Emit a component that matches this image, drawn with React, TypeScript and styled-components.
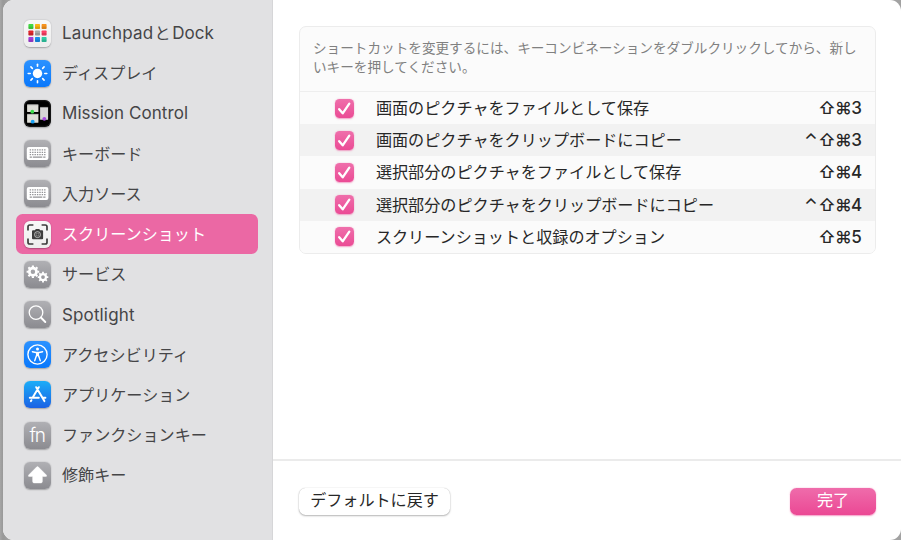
import React from 'react';
import styled, { createGlobalStyle, css } from 'styled-components';

const GlobalStyle = createGlobalStyle`
  * { box-sizing: border-box; }
  body {
    margin: 0;
    overflow: hidden;
    font-family: Inter, "Noto Sans CJK JP", sans-serif;
  }
`;

const Backdrop = styled.div`
  width: 901px;
  height: 540px;
  padding-left: 3px;
  background: linear-gradient(90deg, #a6a6a6 0, #989898 3px, #b4b4b4 20px, #a2a2a2 100%);
`;

const Sheet = styled.main`
  display: flex;
  width: 898px;
  height: 540px;
  overflow: hidden;
  border-radius: 11px;
  background: #fff;
`;

const Sidebar = styled.nav`
  width: 270px;
  flex: none;
  padding: 12.9px 14px 0 13.3px;
  background: #e1e1e3;
  border-right: 1px solid #d6d6d8;
`;

const Item = styled.div<{ $selected?: boolean }>`
  display: flex;
  align-items: center;
  gap: 10.7px;
  height: 40.23px;
  padding-left: 8px;
  border-radius: 6.5px;
  color: ${p => (p.$selected ? '#fff' : '#454547')};
  background: ${p => (p.$selected ? '#eb68a4' : 'transparent')};
`;

const ItemLabel = styled.span`
  display: flex;
  font-size: 16.1px;
  line-height: 24px;
  white-space: nowrap;
`;

const Latin = styled.span<{ $spacing?: number }>`
  font-size: 17px;
  letter-spacing: ${p => p.$spacing ?? 0}px;
`;

const Particle = styled.span`
  margin: 0 1.6px 0 1.2px;
`;

const Icon = styled.svg`
  display: block;
  width: 27px;
  height: 27px;
  flex: none;
  border-radius: 6px;
  box-shadow: 0 0.5px 1.5px rgba(0, 0, 0, 0.28);
`;

const Content = styled.section`
  display: flex;
  flex: 1;
  flex-direction: column;
`;

const Body = styled.div`
  flex: 1;
  padding: 26px 25px 0 26px;
`;

const Panel = styled.div`
  height: 228px;
  overflow: hidden;
  border: 1px solid #ececec;
  border-radius: 7px;
  background: #fbfbfb;
`;

const Hint = styled.p`
  height: 65px;
  margin: 0;
  padding: 12px 0 0 13px;
  border-bottom: 1.5px solid #eee;
  color: #808080;
  font-size: 13.61px;
  line-height: 19px;
  white-space: nowrap;
`;

const Shortcut = styled.div<{ $striped: boolean }>`
  display: flex;
  align-items: center;
  height: 32.2px;
  padding: 0 13px 0 35.4px;
  color: #272727;
  font-size: 16.13px;
  line-height: 24px;
  white-space: nowrap;
  background: ${p => (p.$striped ? '#f2f2f2' : '#fbfbfb')};
`;

const CheckBox = styled.span`
  display: flex;
  width: 19px;
  height: 19px;
  margin-right: 21.5px;
  border-radius: 4.5px;
  background: linear-gradient(#ef6fab, #eb4b95);
  box-shadow: 0 0.5px 1.5px rgba(235, 75, 149, 0.5);
`;

const Keys = styled.span`
  display: flex;
  margin-left: auto;
  font-size: 17px;
  font-weight: 500;
`;

const Key = styled.span<{ $width: number }>`
  width: ${p => p.$width}px;
  text-align: center;
`;

const Footer = styled.footer`
  display: flex;
  justify-content: space-between;
  height: 81px;
  padding: 26.5px 25px 0 26px;
  border-top: 2px solid #ebebeb;
`;

const primary = css`
  width: 86px;
  color: #fff;
  background: linear-gradient(#ef6cab, #eb4894);
  box-shadow: 0 0.5px 1.5px rgba(235, 75, 149, 0.55);
`;

const secondary = css`
  width: 151px;
  color: #272727;
  background: #fff;
  box-shadow: 0 0 1px rgba(0, 0, 0, 0.25), 0 1px 2px rgba(0, 0, 0, 0.28);
`;

const Button = styled.button<{ $primary?: boolean }>`
  height: 27px;
  padding: 0 0 3px;
  border: 0;
  border-radius: 6.5px;
  font: 16.1px/24px Inter, "Noto Sans CJK JP", sans-serif;
  ${p => (p.$primary ? primary : secondary)}
`;

type Tone = 'gray' | 'blue' | 'sky' | 'white' | 'black';
const tones: Record<Tone, [string, string]> = {
  gray: ['#b0b0b4', '#8b8b90'],
  blue: ['#2c92ff', '#0a78fb'],
  sky: ['#1badf8', '#1b62e4'],
  white: ['#f8f8f8', '#ededed'],
  black: ['#000', '#000'],
};

function Tile({ tone, children }: { tone: Tone; children: React.ReactNode }) {
  return (
    <Icon viewBox="0 0 27 27">
      <defs>
        <linearGradient id={`tone-${tone}`} x2="0" y2="1">
          <stop stopColor={tones[tone][0]} />
          <stop offset="1" stopColor={tones[tone][1]} />
        </linearGradient>
      </defs>
      <rect width="27" height="27" fill={`url(#tone-${tone})`} />
      {children}
    </Icon>
  );
}

const padColors = ['#43d944', '#fbb615', '#f7931d', '#e0262c', '#aaa', '#fb3f65', '#a33dd8', '#158fed', '#2fcba5'];

const Launchpad = () => (
  <Tile tone="white">
    {padColors.map((c, i) => (
      <g key={c}>
        <rect x={4.4 + (i % 3) * 6.6} y={4 + Math.floor(i / 3) * 6.5} width="5" height="5" rx="0.8" fill={c} />
        <rect x={4.4 + (i % 3) * 6.6} y={6.6 + Math.floor(i / 3) * 6.5} width="5" height="2.4" rx="0.8" fill="#000" opacity="0.12" />
      </g>
    ))}
  </Tile>
);

const Display = () => (
  <Tile tone="blue">
    <circle cx="13.5" cy="13.5" r="4.7" fill="#fff" />
    {[0, 45, 90, 135, 180, 225, 270, 315].map(a => (
      <path key={a} d="M13.5 4.2v2" stroke="#fff" strokeWidth="1.6" strokeLinecap="round" transform={`rotate(${a} 13.5 13.5)`} />
    ))}
  </Tile>
);

const Mission = () => (
  <Tile tone="black">
    <rect x="0.7" y="0.7" width="25.6" height="25.6" rx="5.4" fill="none" stroke="#444" strokeWidth="0.4" />
    <rect x="3.1" y="4.6" width="11.3" height="7.4" rx="0.5" fill="#deded8" />
    <rect x="3.1" y="14.1" width="11.3" height="8.6" rx="0.5" fill="#deded8" />
    <rect x="16.1" y="7.2" width="8" height="12.6" rx="0.5" fill="#d6d6d6" />
    <path d="M3.1 4.8h11.3M3.1 14.3h11.3M16.1 7.4h8" stroke="#999" strokeWidth="0.7" />
    <circle cx="8.3" cy="11.7" r="1.9" fill="#3ddb4b" />
    <circle cx="8.7" cy="21.7" r="1.9" fill="#18a2f5" />
    <circle cx="20.3" cy="18.8" r="1.9" fill="#a74be0" />
  </Tile>
);

const Keyboard = () => (
  <Tile tone="gray">
    <rect x="2.8" y="7" width="21.6" height="13" rx="2" fill="#fff" />
    <path d="M5.7 9.9h16M5.7 12.3h16M5.7 14.7h16" stroke="#929296" strokeWidth="1.2" strokeDasharray="1.4 1" />
    <path d="M5.7 17.1h2.2M8.8 17.1h9.5M19.2 17.1h2.3" stroke="#929296" strokeWidth="1.2" />
  </Tile>
);

const Screenshot = () => (
  <Tile tone="white">
    <path d="M4 9.4V5.8q0-1.8 1.8-1.8h3.6M17.6 4h3.6q1.8 0 1.8 1.8v3.6M23 17.6v3.6q0 1.8-1.8 1.8h-3.6M9.4 23H5.8q-1.8 0-1.8-1.8v-3.6" fill="none" stroke="#3d3d3d" strokeWidth="1.7" />
    <path d="M8 10.2q0-1 1-1h2l.8-1.2h3.5l.8 1.2h2q1 0 1 1v7q0 1-1 1H9q-1 0-1-1z" fill="#3d3d3d" />
    <circle cx="13.5" cy="13.6" r="3" fill="#3d3d3d" stroke="#d8d8d8" strokeWidth="0.8" />
    <circle cx="13.5" cy="13.6" r="1.4" fill="none" stroke="#aaa" strokeWidth="0.6" />
  </Tile>
);

function Gear({ x, y, r }: { x: number; y: number; r: number }) {
  return (
    <g transform={`translate(${x} ${y})`} stroke="#fff" fill="none">
      <circle r={r * 0.57} strokeWidth={r * 0.43} />
      {[0, 45, 90, 135, 180, 225, 270, 315].map(a => (
        <path key={a} d={`M0 ${-r * 0.7}V${-r}`} strokeWidth={r * 0.34} transform={`rotate(${a})`} />
      ))}
    </g>
  );
}

const Services = () => (
  <Tile tone="gray">
    <Gear x={8.9} y={10.8} r={6.3} />
    <Gear x={19} y={16.1} r={5.3} />
  </Tile>
);

const Spotlight = () => (
  <Tile tone="gray">
    <circle cx="12" cy="11.6" r="6.8" fill="none" stroke="#fff" strokeWidth="1.3" />
    <path d="M16.9 16.5l4.4 4.5" stroke="#fff" strokeWidth="1.9" strokeLinecap="round" />
  </Tile>
);

const Accessibility = () => (
  <Tile tone="blue">
    <circle cx="13.5" cy="13.5" r="9.6" fill="none" stroke="#fff" strokeWidth="1.4" />
    <circle cx="13.5" cy="8" r="1.5" fill="#fff" />
    <path d="M8.4 10.7l3.6.8h3l3.6-.8" fill="none" stroke="#fff" strokeWidth="1.4" strokeLinecap="round" strokeLinejoin="round" />
    <path d="M12 11h3v4.2h-3z" fill="#fff" />
    <path d="M12.5 14.5l-1.8 5.3M14.5 14.5l1.8 5.3" stroke="#fff" strokeWidth="1.4" strokeLinecap="round" />
  </Tile>
);

const Apps = () => (
  <Tile tone="sky">
    <g fill="none" stroke="#fff" strokeWidth="2" strokeLinecap="round">
      <path d="M14.8 6.2L9 15.9M12.2 6.2l8.2 13.9M5.8 16.7h9M18.8 16.7h2.6M7.4 19.2l-.5.9" />
    </g>
  </Tile>
);

const FnGlyph = styled.text`
  font: 300 19px Inter, sans-serif;
  fill: #fff;
  text-anchor: middle;
`;

const Fn = () => (
  <Tile tone="gray">
    <FnGlyph x="13.7" y="20" textLength="16.5">fn</FnGlyph>
  </Tile>
);

const Modifier = () => (
  <Tile tone="gray">
    <path d="M12.8 4.8q.7-.6 1.4 0l8.2 8.2q1 1.5-.6 1.5h-3.4v4.9q0 1.6-1.6 1.6h-6.6q-1.6 0-1.6-1.6v-4.9H5.2q-1.6 0-.6-1.5z" fill="#fff" stroke="#fff" strokeWidth="0.4" strokeLinejoin="round" />
  </Tile>
);

const items: { icon: React.ReactNode; label: React.ReactNode; selected?: boolean }[] = [
  { icon: <Launchpad />, label: <><Latin $spacing={0.2}>Launchpad</Latin><Particle>と</Particle><Latin>Dock</Latin></> },
  { icon: <Display />, label: 'ディスプレイ' },
  { icon: <Mission />, label: <Latin $spacing={0.06}>Mission Control</Latin> },
  { icon: <Keyboard />, label: 'キーボード' },
  { icon: <Keyboard />, label: '入力ソース' },
  { icon: <Screenshot />, label: 'スクリーンショット', selected: true },
  { icon: <Services />, label: 'サービス' },
  { icon: <Spotlight />, label: <Latin $spacing={0.14}>Spotlight</Latin> },
  { icon: <Accessibility />, label: 'アクセシビリティ' },
  { icon: <Apps />, label: 'アプリケーション' },
  { icon: <Fn />, label: 'ファンクションキー' },
  { icon: <Modifier />, label: '修飾キー' },
];

const shortcuts = [
  { label: '画面のピクチャをファイルとして保存', digit: '3' },
  { label: '画面のピクチャをクリップボードにコピー', digit: '3', control: true },
  { label: '選択部分のピクチャをファイルとして保存', digit: '4' },
  { label: '選択部分のピクチャをクリップボードにコピー', digit: '4', control: true },
  { label: 'スクリーンショットと収録のオプション', digit: '5' },
];

export default function App() {
  return (
    <Backdrop>
      <GlobalStyle />
      <Sheet>
        <Sidebar>
          {items.map((item, i) => (
            <Item key={i} $selected={item.selected}>
              {item.icon}
              <ItemLabel>{item.label}</ItemLabel>
            </Item>
          ))}
        </Sidebar>
        <Content>
          <Body>
            <Panel>
              <Hint>
                ショートカットを変更するには、キーコンビネーションをダブルクリックしてから、新し
                <br />
                いキーを押してください。
              </Hint>
              {shortcuts.map((s, i) => (
                <Shortcut key={s.label} $striped={i % 2 === 1}>
                  <CheckBox>
                    <svg width="19" height="19" viewBox="0 0 19 19">
                      <path d="M4.2 10.2l3.5 4.1 6.6-9.7" fill="none" stroke="#fff" strokeWidth="2.3" strokeLinecap="round" strokeLinejoin="round" />
                    </svg>
                  </CheckBox>
                  {s.label}
                  <Keys>
                    {s.control && <Key $width={14}>⌃</Key>}
                    <Key $width={17}>⇧</Key>
                    <Key $width={16}>⌘</Key>
                    <Key $width={11}>{s.digit}</Key>
                  </Keys>
                </Shortcut>
              ))}
            </Panel>
          </Body>
          <Footer>
            <Button>デフォルトに戻す</Button>
            <Button $primary>完了</Button>
          </Footer>
        </Content>
      </Sheet>
    </Backdrop>
  );
}
